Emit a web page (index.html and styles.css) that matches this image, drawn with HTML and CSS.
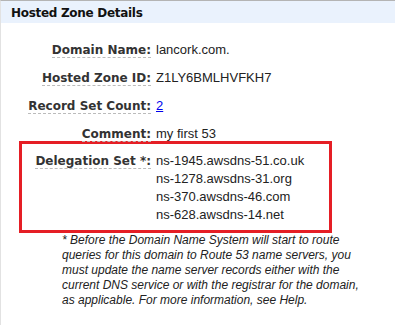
FILE: index.html
```html
<!DOCTYPE html>
<html lang="en">
<head>
  <meta charset="UTF-8" />
  <title>Hosted Zone Details</title>
  <link rel="stylesheet" href="styles.css">
</head>
<body>
  <div class="panel">
    <div class="panel-header">Hosted Zone Details</div>

    <div class="details">
      <div class="row">
        <div class="label"><span>Domain Name:</span></div>
        <div class="value">lancork.com.</div>
      </div>
      <div class="row">
        <div class="label"><span>Hosted Zone ID:</span></div>
        <div class="value">Z1LY6BMLHVFKH7</div>
      </div>
      <div class="row">
        <div class="label"><span>Record Set Count:</span></div>
        <div class="value"><a href="#">2</a></div>
      </div>
      <div class="row">
        <div class="label"><span>Comment:</span></div>
        <div class="value">my first 53</div>
      </div>

      <!-- highlighted delegation set -->
      <div class="delegation">
        <div class="row">
          <div class="label"><span>Delegation Set *:</span></div>
          <div class="value ns-list">
            <div>ns-1945.awsdns-51.co.uk</div>
            <div>ns-1278.awsdns-31.org</div>
            <div>ns-370.awsdns-46.com</div>
            <div>ns-628.awsdns-14.net</div>
          </div>
        </div>
      </div>

      <p class="footnote">
        * Before the Domain Name System will start to route<br>
        queries for this domain to Route 53 name servers, you<br>
        must update the name server records either with the<br>
        current DNS service or with the registrar for the domain,<br>
        as applicable. For more information, see Help.
      </p>
    </div>
  </div>
</body>
</html>
```

FILE: styles.css
```css
html, body {
  margin: 0;
  padding: 0;
  background: #fff;
  height: 100vh;
  overflow: hidden;
}

.panel {
  border-left: 1px solid #e2e2e2;
  border-top: 1px solid #b4b4b4;
  height: 100%;
  font-family: 'Liberation Sans', Arial, sans-serif;
  color: #222;
}

.panel-header {
  background: #eaf2fd;
  padding: 4px 10px 1px;
  line-height: 17px;
  font-family: 'DejaVu Sans', Verdana, sans-serif;
  font-weight: bold;
  font-size: 12px;
  letter-spacing: -0.3px;
  color: #111;
}

.details {
  padding-top: 19px;
}

.row {
  display: grid;
  grid-template-columns: 129px 1fr;
  column-gap: 5px;
  margin-left: 21px;
  margin-bottom: 12px;
  line-height: 16px;
  font-size: 13px;
  white-space: nowrap;
}

.label {
  text-align: right;
  font-family: 'DejaVu Sans', Verdana, sans-serif;
  font-weight: bold;
  font-size: 12px;
  color: #333;
}

.label span {
  border-bottom: 1px dashed #bbb;
}

.value a {
  color: #0000ee;
}

.delegation {
  box-sizing: border-box;
  width: 313px;
  margin-left: 18px;
  margin-top: -13px;
  border: 3px solid #e51e25;
  padding: 8px 0 6px;
}

.delegation .row {
  margin: 0;
  line-height: 18px;
}

.footnote {
  margin: 0 0 0 61px;
  font-size: 12px;
  line-height: 15px;
  font-style: italic;
  color: #222;
}
```
